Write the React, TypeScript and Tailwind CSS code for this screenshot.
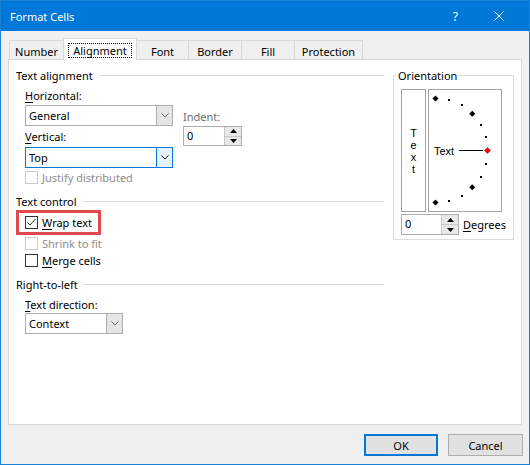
import React from "react";
import { clsx } from "clsx";

const tabs = [
  { label: "Number", w: "w-[55px]" },
  { label: "Alignment", w: "w-[74px]", active: true },
  { label: "Font", w: "w-[53px]" },
  { label: "Border", w: "w-[54px]" },
  { label: "Fill", w: "w-[54px]" },
  { label: "Protection", w: "w-[69px]" },
];

function Chevron({ color = "#606060" }: { color?: string }) {
  return (
    <svg width="8" height="5" viewBox="0 0 8 5">
      <path d="M0.5 0.5 L4 4 L7.5 0.5" fill="none" stroke={color} strokeWidth="1" />
    </svg>
  );
}

function Select({ value, className, focused }: { value: string; className: string; focused?: boolean }) {
  return (
    <div
      className={clsx(
        "flex h-[21px] border bg-white",
        focused ? "border-[#0078d7]" : "border-[#adadad]",
        className,
      )}
    >
      <span className="flex-1 pl-[3px] leading-[19px]">{value}</span>
      <div
        className={clsx(
          "flex w-[16px] items-center justify-center border-l",
          focused ? "border-[#0078d7] bg-[#e5f1fb]" : "border-[#adadad] bg-[#e5e5e5]",
        )}
      >
        <Chevron color={focused ? "#1a1a1a" : "#606060"} />
      </div>
    </div>
  );
}

function Arrow({ down }: { down?: boolean }) {
  return (
    <svg width="7" height="4" viewBox="0 0 7 4">
      <path d={down ? "M0 0 L7 0 L3.5 4 Z" : "M3.5 0 L7 4 L0 4 Z"} fill="#000" />
    </svg>
  );
}

function Spin({ className }: { className: string }) {
  return (
    <div className={clsx("flex h-[20px] border border-[#abadb3] bg-white", className)}>
      <span className="flex-1 pl-[3px] leading-[18px]">0</span>
      <div className="flex w-[17px] flex-col border-l border-[#c8c8c8] bg-[#e8e8e8]">
        <div className="flex flex-1 items-center justify-center border-b border-[#c8c8c8]">
          <Arrow />
        </div>
        <div className="flex flex-1 items-center justify-center">
          <Arrow down />
        </div>
      </div>
    </div>
  );
}

function CheckBox({ checked, disabled }: { checked?: boolean; disabled?: boolean }) {
  return (
    <div
      className={clsx(
        "flex h-[13px] w-[13px] items-center justify-center border bg-white",
        disabled ? "border-[#cccccc]" : "border-[#333333]",
      )}
    >
      {checked ? (
        <svg width="11" height="11" viewBox="0 0 11 11">
          <path d="M1.5 5.5 L4 8 L9.5 2" fill="none" stroke="#333" strokeWidth="1" />
        </svg>
      ) : null}
    </div>
  );
}

function CheckRow({
  children,
  checked,
  disabled,
  className,
}: {
  children: React.ReactNode;
  checked?: boolean;
  disabled?: boolean;
  className?: string;
}) {
  return (
    <div className={clsx("flex h-[15px] items-center", className)}>
      <CheckBox checked={checked} disabled={disabled} />
      <span className={clsx("ml-[4px]", disabled && "text-[#8d8d8d]")}>{children}</span>
    </div>
  );
}

function GroupHeader({ label, className }: { label: string; className?: string }) {
  return (
    <div className={clsx("flex h-[15px] items-center", className)}>
      <span>{label}</span>
      <div className="ml-[5px] h-px flex-1 bg-[#dcdcdc]" />
    </div>
  );
}

function Key({ children }: { children: React.ReactNode }) {
  return <span className="underline underline-offset-[2px]">{children}</span>;
}

// orientation dial points, 15 degree steps from +90 to -90
const dial = Array.from({ length: 13 }, (_, i) => {
  const deg = 90 - i * 15;
  const rad = (deg * Math.PI) / 180;
  return {
    deg,
    x: 6.5 + 52 * Math.cos(rad),
    y: 60.5 - 52 * Math.sin(rad),
  };
});

function Dial() {
  return (
    <svg width="72" height="121" viewBox="0 0 72 121">
      {dial.map((p) =>
        p.deg % 45 === 0 ? (
          <path
            key={p.deg}
            d={`M${p.x} ${p.y - 3} L${p.x + 3} ${p.y} L${p.x} ${p.y + 3} L${p.x - 3} ${p.y} Z`}
            fill={p.deg === 0 ? "#ff0000" : "#000"}
            stroke={p.deg === 0 ? "#8b0000" : "none"}
            strokeWidth="0.5"
          />
        ) : (
          <rect key={p.deg} x={Math.round(p.x) - 1} y={Math.round(p.y) - 1} width="2" height="2" fill="#000" />
        ),
      )}
      <line x1="30" y1="60.5" x2="54" y2="60.5" stroke="#000" strokeWidth="1" />
      <text x="5" y="64.5" fontSize="11" fontFamily="'Liberation Sans', Arial, sans-serif" fill="#000">
        Text
      </text>
    </svg>
  );
}

export default function App() {
  return (
    <div className="flex h-[465px] w-[530px] flex-col border border-[#1883d7] bg-[#f0f0f0] font-['Noto_Sans',sans-serif] text-[11px] leading-[15px] text-black">
      {/* Title bar */}
      <div className="flex h-[30px] shrink-0 items-center bg-[#0078d7] pl-[9px] pr-[25px] text-[11px] text-white">
        <span>Format Cells</span>
        <span className="ml-auto text-[12px]">?</span>
        <svg className="ml-[36px]" width="10" height="10" viewBox="0 0 10 10">
          <path d="M0.5 0.5 L9.5 9.5 M9.5 0.5 L0.5 9.5" stroke="#fff" strokeWidth="1" />
        </svg>
      </div>

      <div className="flex flex-1 flex-col pl-[7px] pr-[6px]">
        {/* Tabs */}
        <div className="mt-[7px] flex h-[21px] items-end pl-[1px]">
          {tabs.map((t, i) =>
            t.active ? (
              <div
                key={t.label}
                className={clsx(
                  "relative z-10 -mb-px flex h-[22px] justify-center border border-b-0 border-[#d9d9d9] bg-white pt-[4px]",
                  t.w,
                  i > 0 && "-ml-px",
                )}
              >
                <span className="h-[15px] border border-dotted border-black px-[4px] leading-[13px]">{t.label}</span>
              </div>
            ) : (
              <div
                key={t.label}
                className={clsx(
                  "flex h-[19px] justify-center border border-b-0 border-[#d9d9d9] bg-[#f0f0f0] pt-[3px]",
                  t.w,
                  i > 0 && "-ml-px",
                )}
              >
                {t.label}
              </div>
            ),
          )}
        </div>

        {/* Panel */}
        <div className="flex h-[366px] w-[514px] border border-[#d9d9d9] bg-white pl-[7px]">
          <div className="flex w-[368px] flex-col">
            <GroupHeader label="Text alignment" className="mt-[8px]" />
            <div className="flex pl-[9px]">
              <div className="flex w-[148px] flex-col">
                <div className="mt-[5px] h-[15px]">
                  <Key>H</Key>orizontal:
                </div>
                <Select value="General" className="mt-[2px] w-[148px]" />
                <div className="mt-[3px] h-[15px]">
                  <Key>V</Key>ertical:
                </div>
                <Select value="Top" className="mt-[3px] w-[148px]" focused />
                <CheckRow disabled className="mt-[2px]">
                  Justify distributed
                </CheckRow>
              </div>
              <div className="ml-[10px] flex flex-col">
                <div className="mt-[26px] h-[15px] text-[#6d6d6d]">Indent:</div>
                <Spin className="mt-[2px] w-[59px]" />
              </div>
            </div>

            <GroupHeader label="Text control" className="mt-[9px]" />
            <div className="mt-[1px] flex h-[25px] w-[85px] items-center border-[3px] border-[#e4484a] pl-[6px]">
              <CheckBox checked />
              <span className="ml-[4px]">
                <Key>W</Key>rap text
              </span>
            </div>
            <CheckRow disabled className="mt-[1px] pl-[9px]">
              Shrink to fit
            </CheckRow>
            <CheckRow className="mt-[2px] pl-[9px]">
              <Key>M</Key>erge cells
            </CheckRow>

            <GroupHeader label="Right-to-left" className="mt-[9px]" />
            <div className="mt-[5px] h-[15px] pl-[9px]">
              <Key>T</Key>ext direction:
            </div>
            <div className="pl-[9px]">
              <Select value="Context" className="mt-[1px] w-[98px]" />
            </div>
          </div>

          {/* Orientation */}
          <fieldset className="ml-[9px] mt-[8px] flex h-[172px] w-[121px] flex-col border border-[#dcdcdc] pl-[7px]">
            <legend className="-ml-[4px] px-[1px] leading-[15px]">Orientation</legend>
            <div className="mt-[6px] flex">
              <div className="flex h-[123px] w-[25px] flex-col items-center justify-center border border-[#a3a3a3] font-['Liberation_Sans',Arial,sans-serif] text-[11px] leading-[12px]">
                <span>T</span>
                <span>e</span>
                <span>x</span>
                <span>t</span>
              </div>
              <div className="ml-[2px] h-[123px] w-[74px] border border-[#a3a3a3]">
                <Dial />
              </div>
            </div>
            <div className="mt-[2px] flex items-center">
              <Spin className="h-[21px] w-[58px]" />
              <span className="ml-[4px]">
                <Key>D</Key>egrees
              </span>
            </div>
          </fieldset>
        </div>

        {/* Buttons */}
        <div className="mt-[9px] flex justify-end gap-[10px]">
          <button className="h-[22px] w-[74px] border-2 border-[#0078d7] bg-[#e1e1e1]">OK</button>
          <button className="h-[22px] w-[75px] border border-[#adadad] bg-[#e1e1e1]">Cancel</button>
        </div>
      </div>
    </div>
  );
}
